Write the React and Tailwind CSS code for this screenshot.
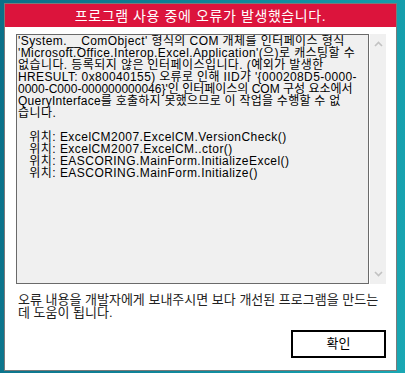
import React from "react";

const bodyLines = [
  ["'System.__ComObject' 형식의 COM 개체를 인터페이스 형식", "tracking-[0.42px]"],
  ["'Microsoft.Office.Interop.Excel.Application'(으)로 캐스팅할 수", "tracking-[0.4px]"],
  ["없습니다. 등록되지 않은 인터페이스입니다. (예외가 발생한", "tracking-[0.42px]"],
  ["HRESULT: 0x80040155) 오류로 인해 IID가 '{000208D5-0000-", "tracking-[0.35px]"],
  ["0000-C000-000000000046}'인 인터페이스의 COM 구성 요소에서", "tracking-[0px]"],
  ["QueryInterface를 호출하지 못했으므로 이 작업을 수행할 수 없", "tracking-[0.25px]"],
  ["습니다.", "tracking-[0.45px]"],
  ["\u00a0", ""],
  ["   위치: ExcelCM2007.ExcelCM.VersionCheck()", "tracking-[0.45px]"],
  ["   위치: ExcelCM2007.ExcelCM..ctor()", "tracking-[0.45px]"],
  ["   위치: EASCORING.MainForm.InitializeExcel()", "tracking-[0.45px]"],
  ["   위치: EASCORING.MainForm.Initialize()", "tracking-[0.45px]"],
];

const font = { fontFamily: '"Liberation Sans", "Noto Sans CJK KR", sans-serif' };

export default function App() {
  return (
    <div
      className="w-[405px] h-[373px] overflow-hidden pl-[4px] pt-[3px] bg-[linear-gradient(100deg,#0b6f88_0%,#0f8196_40%,#139aa9_80%,#1aa8b4_100%)]"
      style={font}
    >
      <div className="w-[393px] h-[368px] border border-[#7a7a7a] bg-white flex flex-col">
        <div className="h-[23px] bg-[#dc143c] flex items-center justify-center text-white text-[14px] leading-none tracking-[0.6px]">
          프로그램 사용 중에 오류가 발생했습니다.
        </div>
        <div className="flex flex-col pl-[11px] pt-[7px] w-[381px]">
          <div className="flex h-[250px]">
            <div className="w-[354px] border border-[#6a6a6a] bg-[#f0f0f0] pl-[1px] overflow-hidden">
              {bodyLines.map(([l, t], i) => (
                <div
                  key={i}
                  className={`whitespace-pre text-[12px] leading-[12px] h-[12px] text-black ${t}`}
                >
                  {l}
                </div>
              ))}
            </div>
            <div className="w-[16px] ml-[1px] bg-[#f0f0f0] flex flex-col items-center justify-between py-[7px]">
              <svg width="9" height="6" viewBox="0 0 9 6">
                <path d="M1 5 L4.5 1.5 L8 5" fill="none" stroke="#c2c2c2" strokeWidth="1.6" />
              </svg>
              <svg width="9" height="6" viewBox="0 0 9 6">
                <path d="M1 1 L4.5 4.5 L8 1" fill="none" stroke="#c2c2c2" strokeWidth="1.6" />
              </svg>
            </div>
          </div>
          <div className="mt-[9px] pl-[2px] text-[13px] leading-[13px] text-[#222]">
            <div className="whitespace-nowrap">오류 내용을 개발자에게 보내주시면 보다 개선된 프로그램을 만드는</div>
            <div className="whitespace-nowrap">데 도움이 됩니다.</div>
          </div>
          <div className="flex justify-end mt-[11px]">
            <button className="w-[95px] h-[28px] border-2 border-black bg-white text-[13px] text-black flex items-center justify-center">
              확인
            </button>
          </div>
        </div>
      </div>
    </div>
  );
}
